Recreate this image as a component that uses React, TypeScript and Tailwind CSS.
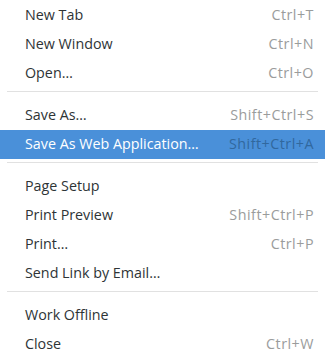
type Item = { label: string; accel?: string; active?: boolean } | "sep";

const items: Item[] = [
  { label: "New Tab", accel: "Ctrl+T" },
  { label: "New Window", accel: "Ctrl+N" },
  { label: "Open…", accel: "Ctrl+O" },
  "sep",
  { label: "Save As…", accel: "Shift+Ctrl+S" },
  { label: "Save As Web Application…", accel: "Shift+Ctrl+A", active: true },
  "sep",
  { label: "Page Setup" },
  { label: "Print Preview", accel: "Shift+Ctrl+P" },
  { label: "Print…", accel: "Ctrl+P" },
  { label: "Send Link by Email…" },
  "sep",
  { label: "Work Offline" },
  { label: "Close", accel: "Ctrl+W" },
];

export default function App() {
  return (
    <div
      className="w-[325px] h-[358px] bg-white pt-px overflow-hidden"
      style={{ fontFamily: '"Open Sans", "DejaVu Sans", sans-serif' }}
    >
      {items.map((item, i) =>
        item === "sep" ? (
          <div key={i} className="h-[13px] pt-[3px]">
            <div className="mx-[7px] h-px bg-[#e1e1e1]" />
          </div>
        ) : (
          <div
            key={i}
            className={
              "h-[29px] flex items-center justify-between pl-[25px] pr-[11px] text-[14.3px] pb-px " +
              (item.active ? "bg-[#4a90d9]" : "")
            }
          >
            <span className={item.active ? "text-white" : "text-[#2e3436]"}>
              {item.label}
            </span>
            {item.accel && (
              <span
                className={
                  "tracking-[0.5px] " +
                  (item.active ? "text-[#31689e]" : "text-[#9a9c9c]")
                }
              >
                {item.accel}
              </span>
            )}
          </div>
        )
      )}
    </div>
  );
}
